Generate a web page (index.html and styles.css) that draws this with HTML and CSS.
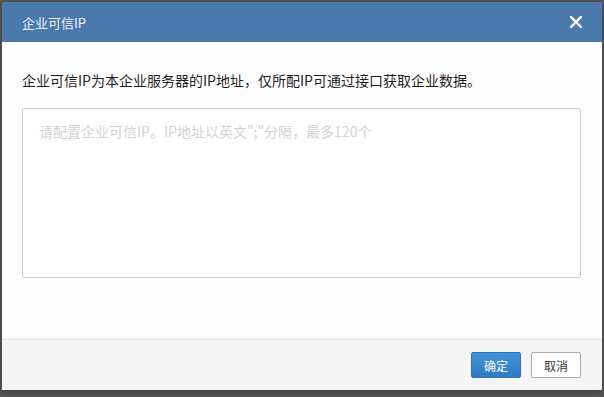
FILE: index.html
```html
<!DOCTYPE html>
<html lang="zh-CN">
<head>
    <meta charset="UTF-8">
    <title>企业可信IP</title>
    <link rel="stylesheet" href="styles.css">
</head>
<body>
    <div class="modal">
        <div class="modal-header">
            <span class="modal-title">企业可信IP</span>
            <button type="button" class="close-btn" aria-label="关闭">
                <svg width="12" height="12" viewBox="0 0 12 12">
                    <path d="M1 1 L11 11 M11 1 L1 11" stroke="#fff" stroke-width="2.4" stroke-linecap="square" fill="none"/>
                </svg>
            </button>
        </div>
        <div class="modal-body">
            <p class="desc">企业可信IP为本企业服务器的IP地址，仅所配IP可通过接口获取企业数据。</p>
            <textarea class="ip-input" placeholder='请配置企业可信IP。IP地址以英文";"分隔，最多120个'></textarea>
        </div>
        <div class="modal-footer">
            <button type="button" class="btn btn-primary">确定</button>
            <button type="button" class="btn">取消</button>
        </div>
    </div>
</body>
</html>
```
FILE: styles.css
```css
html, body {
    margin: 0;
    padding: 0;
}

body {
    background-color: #585858;
    font-family: "Noto Sans CJK SC", "Liberation Sans", sans-serif;
    padding: 2px 0 0 2px;
    height: 397px;
    box-sizing: border-box;
    overflow: hidden;
}

.modal {
    width: 600px;
    height: 388px;
    background-color: #fdfdfd;
    display: flex;
    flex-direction: column;
    box-shadow: 0 2px 8px rgba(0, 0, 0, 0.3);
}

.modal-header {
    height: 40px;
    background-color: #4a79ac;
    display: flex;
    align-items: center;
    justify-content: space-between;
    padding: 0 20px;
    flex-shrink: 0;
}

.modal-title {
    color: #eef2f7;
    font-size: 13px;
}

.close-btn {
    background: none;
    border: none;
    padding: 0;
    width: 12px;
    height: 12px;
    display: flex;
    cursor: pointer;
}

.modal-body {
    flex: 1;
    padding: 28px 21px 0 20px;
}

.desc {
    margin: 0 0 18px;
    font-size: 14px;
    line-height: 20px;
    color: #1f1f1f;
}

.ip-input {
    display: block;
    width: 559px;
    height: 170px;
    box-sizing: border-box;
    border: 1px solid #cfcfcf;
    border-radius: 2px;
    background-color: #fff;
    padding: 12px 16px;
    font-family: inherit;
    font-size: 14px;
    line-height: 20px;
    resize: none;
    outline: none;
}

.ip-input::placeholder {
    color: #d2d2d2;
}

.modal-footer {
    height: 50px;
    border-top: 1px solid #e3e3e3;
    background-color: #f5f5f5;
    display: flex;
    align-items: center;
    justify-content: flex-end;
    gap: 10px;
    padding: 0 21px;
    flex-shrink: 0;
}

.btn {
    width: 50px;
    height: 26px;
    box-sizing: border-box;
    border: 1px solid #a9a9a9;
    border-radius: 2px;
    background-color: #fff;
    color: #333;
    font-family: inherit;
    font-size: 12px;
    padding: 0;
    cursor: pointer;
}

.btn-primary {
    border-color: #2f75b5;
    background: linear-gradient(#4393da, #2e7bc0);
    color: #fff;
}
```
